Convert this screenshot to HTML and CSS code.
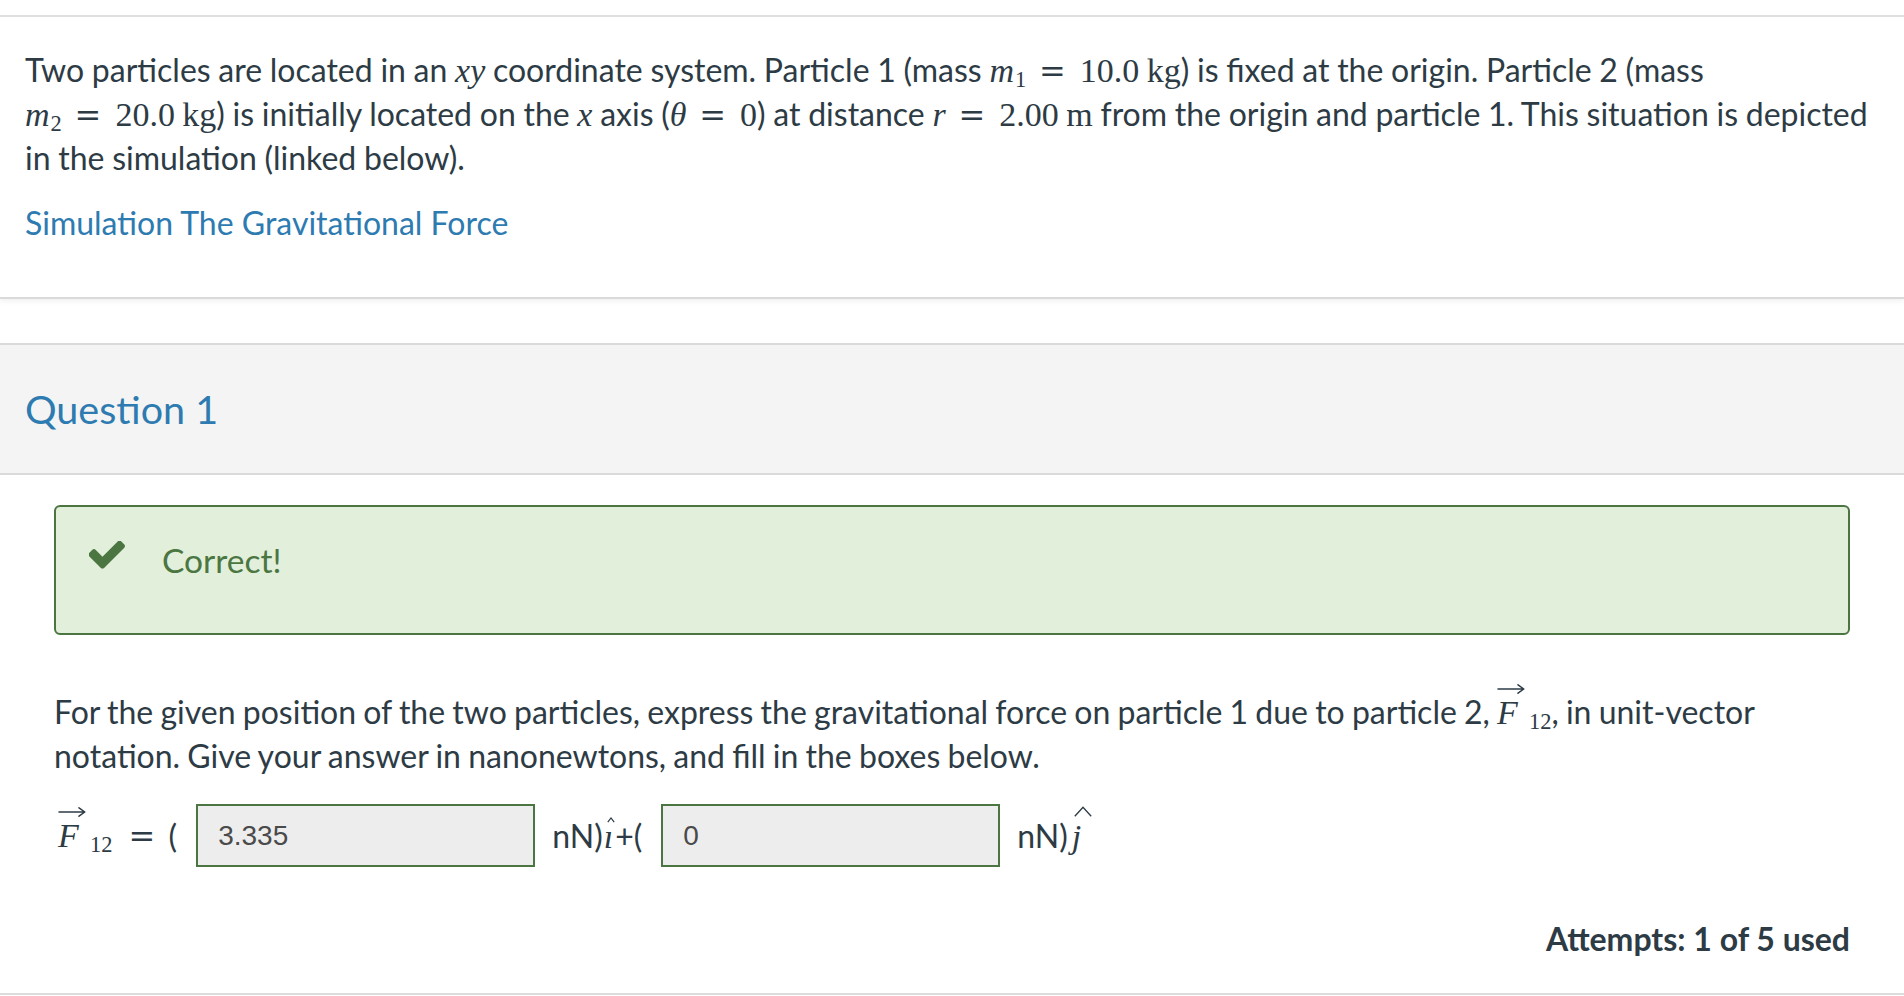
FILE: index.html
```html
<!DOCTYPE html>
<html lang="en">
<head>
<meta charset="utf-8">
<title>Question 1</title>
<link rel="stylesheet" href="styles.css">
</head>
<body>
<div class="page">
  <section class="intro">
    <p class="stem">Two particles are located in an <span class="m"><i>x</i><i>y</i></span> coordinate system. Particle 1 (mass <span class="m"><i>m</i><sub>1</sub><span class="rel">=</span>10.0<span class="sp"></span>kg</span>) is fixed at the origin. Particle 2 (mass <span class="m"><i>m</i><sub>2</sub><span class="rel">=</span>20.0<span class="sp"></span>kg</span>) is initially located on the <span class="m"><i>x</i></span> axis (<span class="m"><i>θ</i><span class="rel">=</span>0</span>) at distance <span class="m"><i>r</i><span class="rel">=</span>2.00<span class="sp"></span>m</span> from the origin and particle 1. This situation is depicted in the simulation (linked below).</p>
    <p class="sim"><a href="#">Simulation The Gravitational Force</a></p>
  </section>

  <section class="question">
    <header class="q-header">
      <h2>Question 1</h2>
    </header>
    <div class="q-body">
      <div class="alert">
        <svg class="check" viewBox="143 362 1528 1168" width="36" height="28" aria-hidden="true"><path d="M1671 566q0 40-28 68l-724 724-136 136q-28 28-68 28t-68-28l-136-136-362-362q-28-28-28-68t28-68l136-136q28-28 68-28t68 28l294 295 656-657q28-28 68-28t68 28l136 136q28 28 28 68z"/></svg>
        <span class="alert-text">Correct!</span>
      </div>

      <p class="prompt">For the given position of the two particles, express the gravitational force on particle 1 due to particle 2, <span class="m"><span class="vec"><i>F</i><svg class="arrow" viewBox="0 0 28 10" width="28" height="10" aria-hidden="true"><path d="M1 5H26.5M21 0.8L26.8 5L21 9.2"/></svg></span><sub>12</sub></span>, in unit-vector notation. Give your answer in nanonewtons, and fill in the boxes below.</p>

      <div class="answer-row">
        <span class="m lhs"><span class="vec"><i>F</i><svg class="arrow" viewBox="0 0 28 10" width="28" height="10" aria-hidden="true"><path d="M1 5H26.5M21 0.8L26.8 5L21 9.2"/></svg></span><sub>12</sub><span class="rel">=</span></span><span class="paren">(</span>
        <input class="ans" type="text" value="3.335" readonly>
        <span class="unit">nN)<span class="m hat-i"><i>ı</i><svg class="smallhat" viewBox="0 0 8 6" width="8" height="6" aria-hidden="true"><path d="M0.8 5.2L4 1L7.2 5.2"/></svg></span>+(</span>
        <input class="ans" type="text" value="0" readonly>
        <span class="unit">nN)<span class="m hat-j"><i>j</i><svg class="widehat" viewBox="0 0 18 11" width="18" height="11" aria-hidden="true"><path d="M0.8 10.2L9 1.2L17.2 10.2"/></svg></span></span>
      </div>

      <div class="attempts">Attempts: 1 of 5 used</div>
    </div>
  </section>
</div>
</body>
</html>
```

FILE: styles.css
```css
* {
  box-sizing: border-box;
}

html, body {
  margin: 0;
  padding: 0;
  background: #ffffff;
}

body {
  font-family: Lato, "Noto Sans", "Liberation Sans", sans-serif;
  font-size: 32px;
  line-height: 44px;
  color: #2d3b45;
}

.page {
  padding-top: 15px;
}

/* ---------- intro block ---------- */
.intro {
  border-top: 2px solid #dfdfdf;
  border-bottom: 2px solid #dadada;
  box-shadow: 0 3px 4px rgba(0, 0, 0, 0.05);
  padding: 31px 25px 52px;
}

.stem {
  margin: 0;
  word-spacing: -0.5px;
}

.sim {
  margin: 21px 0 0;
}

.sim a {
  color: #2d7bb0;
  text-decoration: none;
}

/* ---------- math ---------- */
.m {
  font-family: "Liberation Serif", "DejaVu Serif", serif;
  font-size: 34px;
  line-height: 1;
  white-space: nowrap;
  word-spacing: 0;
}

.m i {
  font-style: italic;
}

.m sub {
  font-size: 0.66em;
  line-height: 0;
  vertical-align: -0.24em;
  margin-left: 1px;
}

.rel {
  font-family: "DejaVu Serif", "Liberation Serif", serif;
  font-size: 0.94em;
  margin: 0 0.44em 0 0.4em;
}

.sp {
  display: inline-block;
  width: 0.22em;
}

.vec {
  position: relative;
  display: inline-block;
  min-width: 31px;
}

.vec .arrow {
  position: absolute;
  left: 0;
  top: -12px;
  fill: none;
  stroke: #2d3b45;
  stroke-width: 1.5;
  stroke-linecap: round;
  stroke-linejoin: round;
}

/* ---------- question ---------- */
.question {
  margin-top: 44px;
  border-top: 2px solid #dadada;
  border-bottom: 2px solid #dcdcdc;
}

.q-header {
  background: #f4f4f4;
  border-bottom: 2px solid #dadada;
  height: 130px;
  padding: 0 25px;
  display: flex;
  align-items: center;
}

.q-header h2 {
  margin: 0;
  font-size: 39.5px;
  font-weight: 400;
  line-height: 48px;
  color: #2d7bb0;
}

.q-body {
  padding: 30px 54px 32px;
}

.alert {
  display: flex;
  align-items: flex-start;
  gap: 37px;
  background: #e2efda;
  border: 2px solid #4b7642;
  border-radius: 6px;
  padding: 31px 33px 51px;
  color: #4b7642;
}

.check {
  flex: none;
  margin-top: 3px;
  fill: #4b7642;
}

.alert-text {
  font-size: 33.5px;
  line-height: 44px;
}

.prompt {
  margin: 55px 0 0;
  word-spacing: -1px;
}

/* ---------- answer row ---------- */
.answer-row {
  display: flex;
  align-items: center;
  margin-top: 26px;
  height: 63px;
}

.lhs {
  padding-left: 4px;
}

.lhs .rel {
  margin: 0 0.42em 0 0.5em;
}

.paren {
  line-height: 44px;
}

.ans {
  width: 339px;
  height: 63px;
  margin: 0 17px 0 19px;
  padding: 0 20px;
  border: 2px solid #4b7642;
  border-radius: 0;
  background: #ededed;
  font-family: "Liberation Sans", Arial, sans-serif;
  font-size: 28px;
  color: #4a4a4a;
  outline: none;
}

.unit {
  line-height: 44px;
  white-space: nowrap;
}

.hat-i,
.hat-j {
  position: relative;
  display: inline-block;
}

.hat-i .smallhat {
  position: absolute;
  left: 3px;
  top: -3px;
  fill: none;
  stroke: #2d3b45;
  stroke-width: 1.2;
}

.hat-i {
  margin: 0 2px 0 1px;
}

.hat-j {
  margin-left: 4px;
}

.hat-j .widehat {
  position: absolute;
  left: 2px;
  top: -14px;
  fill: none;
  stroke: #2d3b45;
  stroke-width: 1.3;
}

.attempts {
  margin-top: 50px;
  text-align: right;
  font-weight: 700;
}
```
